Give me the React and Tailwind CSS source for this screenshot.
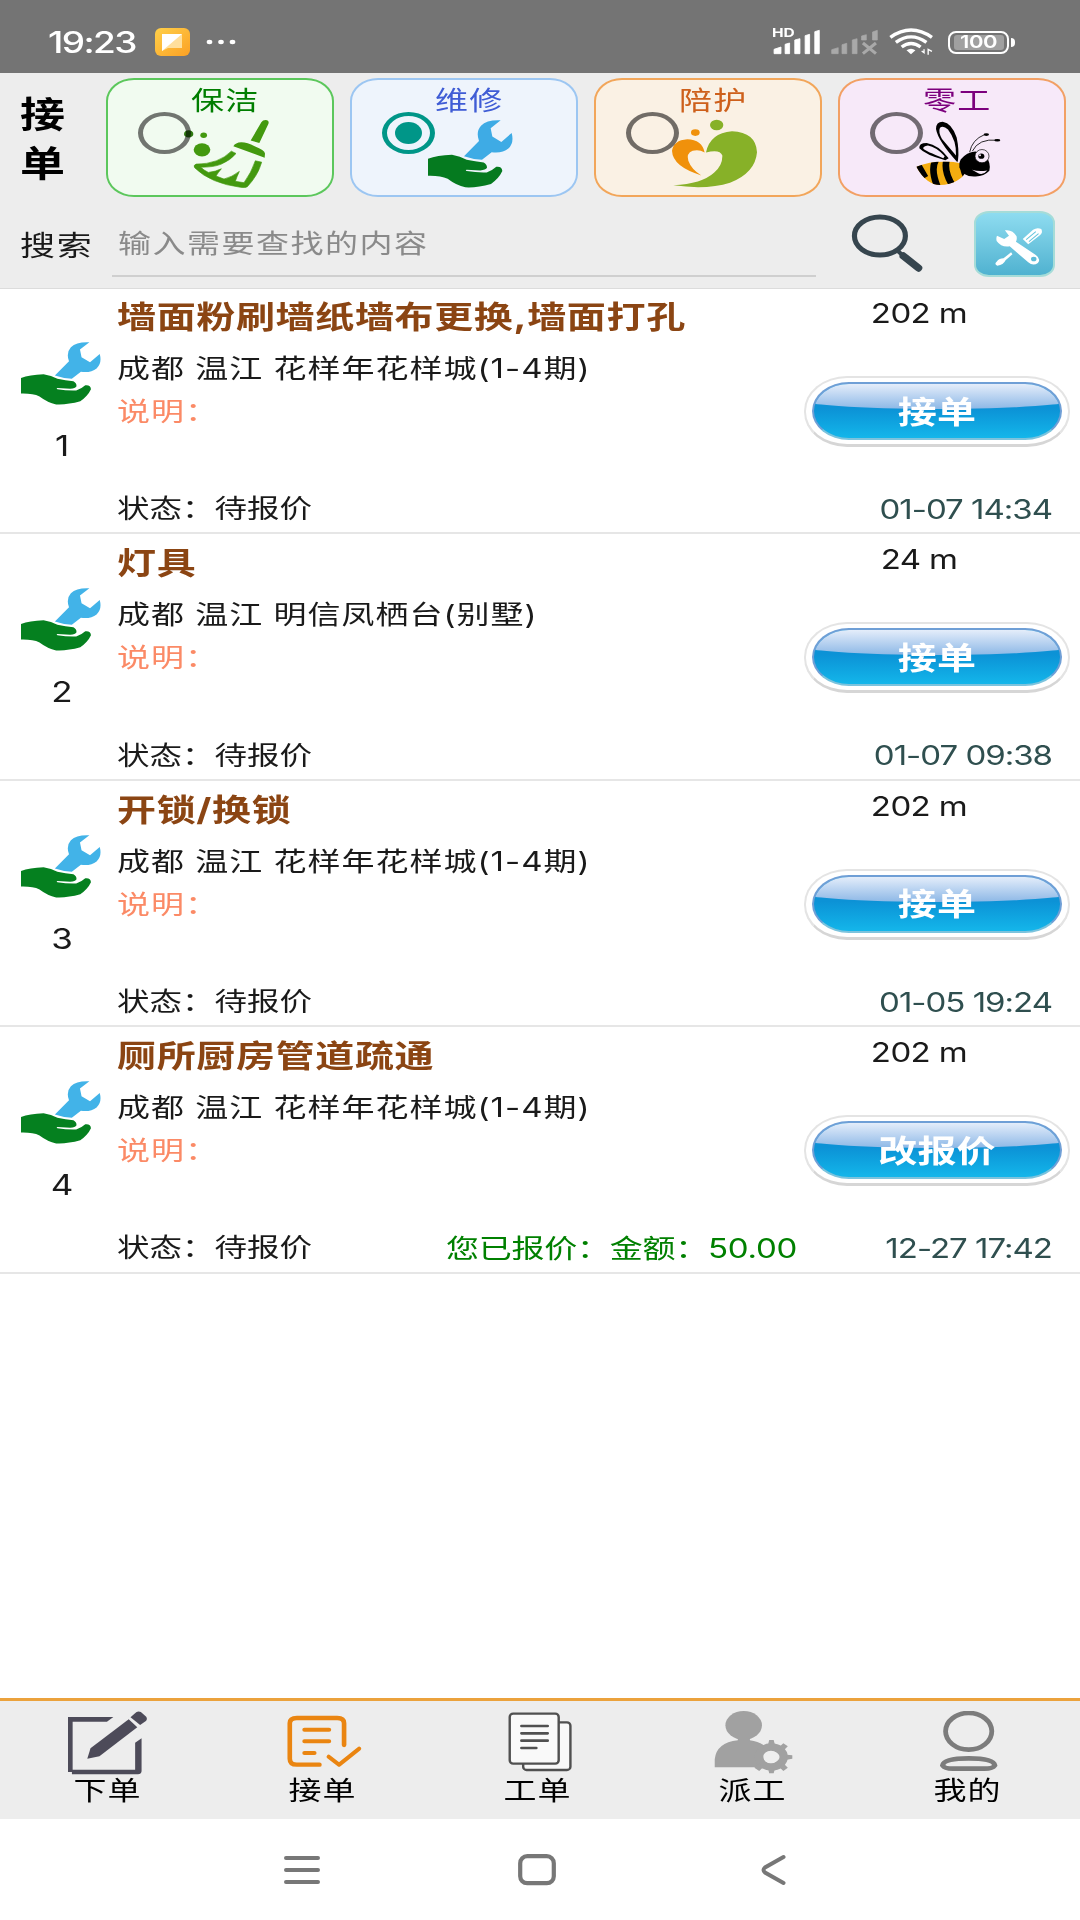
import { useState } from 'react';

const orders = [
  { id: 1, title: '墙面粉刷墙纸墙布更换,墙面打孔', address: '成都 温江 花样年花样城(1-4期)', distance: '202 m', action: '接单', time: '01-07 14:34' },
  { id: 2, title: '灯具', address: '成都 温江 明信凤栖台(别墅)', distance: '24 m', action: '接单', time: '01-07 09:38' },
  { id: 3, title: '开锁/换锁', address: '成都 温江 花样年花样城(1-4期)', distance: '202 m', action: '接单', time: '01-05 19:24' },
  { id: 4, title: '厕所厨房管道疏通', address: '成都 温江 花样年花样城(1-4期)', distance: '202 m', action: '改报价', time: '12-27 17:42', quote: '您已报价：金额：50.00' },
];

// Wide lettering: every label is drawn at 80% height
function Text({ className = '', children }) {
  return <span className={`inline-block scale-y-80 leading-none whitespace-pre ${className}`}>{children}</span>;
}

function BroomIcon() {
  return (
    <svg className="h-[69px] w-[85px]" viewBox="160 118 255 208" preserveAspectRatio="none" fill="#479c10">
      <ellipse cx="174" cy="163" rx="14" ry="11" fill="#2f7a10" />
      <ellipse cx="219" cy="167" rx="10" ry="8" />
      <ellipse cx="214" cy="211" rx="25" ry="20" />
      <path d="M392 128 Q396 121 405 121 Q417 123 413 133 L386 190 L360 183 Z" />
      <path d="M308 200 Q314 189 332 188 Q350 188 372 200 Q402 212 403 222 L402 235 Z" />
      <path stroke="#479c10" strokeWidth="2" d="M302 215 L316 222 Q300 242 272 254 Q248 264 210 263 Q218 272 233 279 Q255 277 272 268 Q262 280 256 290 L280 299 Q304 293 326 276 Q318 293 314 306 L340 310 Q362 280 374 244 L393 248 Q382 288 350 322 Q344 326 330 324 Q240 312 193 266 Q186 258 196 254 Q264 254 302 215 Z" />
    </svg>
  );
}

function RepairIcon({ className }) {
  return (
    <svg className={className} viewBox="23 118 255 208" preserveAspectRatio="none">
      <path fill="#42b3e8" d="M131 230 L176 184 Q166 156 182 138 Q200 120 241 122 L211 146 L216 171 L243 187 L274 160 Q282 190 264 207 Q246 222 214 218 L185 241 Q160 240 131 230 Z" />
      <path fill="#05801f" d="M23 238 Q50 228 95 226 Q120 230 139 241 Q165 246 190 249 Q200 254 200 265 Q196 272 180 273 L139 271 Q134 273 139 275 Q170 280 199 279 Q215 274 228 262 Q245 260 246 275 Q236 297 212 314 Q170 326 135 324 Q108 318 82 298 Q60 288 23 289 Z" />
    </svg>
  );
}

function CareIcon() {
  return (
    <svg className="h-[69px] w-[85px]" viewBox="126 118 255 208" preserveAspectRatio="none">
      <ellipse cx="260" cy="136" rx="20" ry="16" fill="#8abb2c" />
      <ellipse cx="196" cy="159" rx="13" ry="10" fill="#f59a0c" />
      <path fill="#f59a0c" d="M214 288 Q128 262 126 214 Q130 182 172 179 Q216 180 224 219 Q206 208 188 214 Q168 222 175 244 Q184 270 214 288 Z" />
      <path fill="#8abb2c" d="M228 219 Q240 160 306 155 Q378 158 381 218 Q376 280 300 310 Q232 332 130 318 Q216 313 252 280 Q278 258 277 228 Q270 208 228 219 Z" />
    </svg>
  );
}

function BeeIcon() {
  return (
    <svg className="h-[69px] w-[85px]" viewBox="140 118 255 208" preserveAspectRatio="none">
      <path fillRule="evenodd" d="M264 248 Q206 184 200 148 Q200 126 220 126 Q248 130 262 174 Q270 212 266 242 Z M260 228 Q262 184 236 150 Q222 136 212 144 Q206 156 218 178 Z" />
      <path fillRule="evenodd" d="M238 236 L228 242 Q168 226 150 206 Q148 190 172 190 Q208 196 238 236 Z M226 230 Q200 202 176 198 Q160 200 162 208 Q170 216 222 236 Z" />
      <clipPath id="bee-body">
        <path d="M141 262 Q180 246 225 246 Q275 246 288 262 Q294 296 240 313 Q200 324 175 304 Q156 290 141 262 Z" />
      </clipPath>
      <g clipPath="url(#bee-body)">
        <path fill="#fcbd10" d="M141 240 H300 V326 H141 Z" />
        <g fill="none" stroke="#000" strokeWidth="20">
          <path d="M140 250 Q150 268 166 296" strokeWidth="24" />
          <path d="M200 240 Q182 270 206 326" />
          <path d="M232 240 Q222 276 252 322" />
          <path d="M284 240 Q268 270 290 300" strokeWidth="8" />
        </g>
      </g>
      <path d="M274 240 Q292 218 318 216 L348 226 Q366 252 360 274 Q344 292 316 291 Q280 292 270 264 Q268 250 274 240 Z" />
      <ellipse cx="338" cy="230" rx="21" ry="20" fill="#fff" stroke="#000" strokeWidth="2" />
      <ellipse cx="336" cy="230" rx="9" ry="8" />
      <ellipse cx="332" cy="227" rx="3" ry="3" fill="#fff" />
      <path d="M308 271 Q328 278 354 273 Q340 290 324 280 Z" fill="#fff" />
      <path d="M301 218 Q308 180 346 165 M309 215 Q328 176 384 182" fill="none" stroke="#000" strokeWidth="2.5" />
      <ellipse cx="351" cy="165" rx="8" ry="4" />
      <ellipse cx="384" cy="182" rx="9" ry="4" />
    </svg>
  );
}

const categories = [
  { name: '保洁', card: 'border-[#5cc75c] bg-[#f1fbf0]', text: 'text-[#008000]', ring: 'border-[#717570]', icon: <BroomIcon /> },
  { name: '维修', card: 'border-[#9cc6f2] bg-[#eef4fc]', text: 'text-[#4360d8]', ring: 'border-[#009688]', icon: <RepairIcon className="h-[69px] w-[85px]" /> },
  { name: '陪护', card: 'border-[#f2a65a] bg-[#faf1e4]', text: 'text-[#d2651e]', ring: 'border-[#716c66]', icon: <CareIcon /> },
  { name: '零工', card: 'border-[#f2a065] bg-[#f7e9f9]', text: 'text-[#800080]', ring: 'border-[#716a72]', icon: <BeeIcon /> },
];

const tabs = [
  {
    name: '下单',
    icon: (
      <svg className="h-16 w-20" viewBox="191 93 224 192" preserveAspectRatio="none" fill="#4d4b59">
        <path d="M190 111 H318 L300 125 H204 V269 H379 V188 L397 175 V274 Q396 283 387 283 H202 V276 H190 Z" />
        <path d="M361 118 L385 142 L279 229 L245 236 L254 205 Z" />
        <path d="M366 112 L382 97 Q388 92 395 96 L410 110 Q414 117 409 123 L393 135 Z" />
      </svg>
    ),
  },
  {
    name: '接单',
    icon: (
      <svg className="h-16 w-20" viewBox="793 93 224 192" preserveAspectRatio="none" fill="none" stroke="#ea8511" strokeLinecap="round" strokeLinejoin="round">
        <path d="M964 195 V130 Q964 114 945 114 H832 Q812 114 812 130 V236 Q812 254 832 254 H895" strokeWidth="13" />
        <path d="M853 149 H922 M853 184 H922 M853 219 H881" strokeWidth="12" />
        <path d="M921 230 L950 254 L1006 206" strokeWidth="12" />
      </svg>
    ),
  },
  {
    name: '工单',
    icon: (
      <svg className="h-16 w-20" viewBox="-122 93 232 192" preserveAspectRatio="none" fill="#f9f9f9" stroke="#505050" strokeWidth="7" strokeLinecap="round">
        <rect x="-49" y="127" width="137" height="143" rx="10" />
        <rect x="-88" y="101" width="142" height="150" rx="10" />
        <path d="M-54 138 H22 M-54 160 H22 M-54 182 H22 M-54 204 H-11" strokeWidth="8" />
      </svg>
    ),
  },
  {
    name: '派工',
    icon: (
      <svg className="h-16 w-20" viewBox="502 93 232 192" preserveAspectRatio="none" fill="#a1a1a1">
        <ellipse cx="591" cy="136" rx="53" ry="43" />
        <path d="M574 172 H609 V181 Q632 184 650 196 V262 H507 V238 Q512 188 574 181 Z" />
        <ellipse cx="671" cy="231" rx="36" ry="29" fill="none" stroke="#a1a1a1" strokeWidth="24" />
        <path d="M662 192 L665 180 H678 L681 192 Z M662 268 L665 280 H678 L681 268 Z M716 224 L732 226 V236 L716 239 Z M694 201 L706 190 L719 199 L706 212 Z M694 261 L706 273 L719 263 L706 250 Z M648 261 L636 273 L622 263 L636 250 Z M648 201 L638 190 L625 197 L636 212 Z" />
        <ellipse cx="670" cy="231" rx="22" ry="19" fill="#eee" />
      </svg>
    ),
  },
  {
    name: '我的',
    icon: (
      <svg className="h-16 w-20" viewBox="1126 93 232 192" preserveAspectRatio="none" fill="none" stroke="#7c7c7c" strokeWidth="14">
        <ellipse cx="1244" cy="154" rx="67" ry="55" />
        <path d="M1168 256 Q1172 235 1244 235 Q1316 235 1320 256 Q1314 266 1290 266 H1198 Q1174 266 1168 256 Z" />
      </svg>
    ),
  },
];

function StatusBar() {
  return (
    <header className="flex h-[73px] shrink-0 items-center bg-[#747474] pt-[11px] pl-12 pr-[65px] text-white">
      <Text className="w-[107px] text-[37px] font-medium tracking-[-1.6px]">19:23</Text>
      <svg className="h-7 w-[35px]" viewBox="0 0 35 28">
        <defs>
          <linearGradient id="app-badge" x1="0" y1="0" x2="1" y2="1">
            <stop offset="0" stopColor="#ffd04a" />
            <stop offset="1" stopColor="#fba024" />
          </linearGradient>
        </defs>
        <rect width="35" height="28" rx="6" fill="url(#app-badge)" />
        <path d="M7 6 H27 V20 H13 L7 23 Z" fill="#ffdf9c" />
        <path d="M7 6 H27 L7 23 Z" fill="#fff" />
      </svg>
      <svg className="ml-4 h-2 w-[30px]" viewBox="0 0 30 8" fill="#fff">
        <ellipse cx="3.5" cy="4" rx="2.8" ry="2.2" />
        <ellipse cx="15" cy="4" rx="2.8" ry="2.2" />
        <ellipse cx="26.5" cy="4" rx="2.8" ry="2.2" />
      </svg>

      <div className="ml-auto flex items-center">
        {/* SIM 1, HD */}
        <div className="relative h-7 w-[49px]">
          <Text className="absolute -top-[3px] left-0 text-[15.5px] font-bold">HD</Text>
          <svg className="h-7 w-[49px]" viewBox="672 86 142 84" preserveAspectRatio="none" fill="#fff" stroke="#fff" strokeWidth="2.5" strokeLinejoin="round">
            <path d="M678 150 L698 143 V163 H678 Z M710 135 L723 131 V163 H710 Z M738 122 L753 118 V163 H738 Z M768 109 L781 105 V163 H768 Z M796 97 L809 93 V163 H796 Z" />
          </svg>
        </div>
        {/* SIM 2, no service */}
        <svg className="ml-[10px] h-7 w-[47px]" viewBox="843 86 137 84" preserveAspectRatio="none" fill="#a9a9a9" stroke="#a9a9a9" strokeWidth="2">
          <path d="M845 151 L864 145 V163 H845 Z M875 136 L889 132 V163 H875 Z M905 122 L919 118 V163 H905 Z M932 110 L946 106 V122 H932 Z M964 98 L978 93 V122 H964 Z" />
          <path d="M936 131 L974 163 M974 131 L936 163" strokeWidth="9" />
        </svg>
        <svg className="ml-[11px] h-7 w-[45px]" viewBox="1013 86 131 84" preserveAspectRatio="none" fill="none" stroke="#fff" strokeWidth="10">
          <path d="M1017 114 Q1077 70 1138 114 M1033 129 Q1077 96 1122 129 M1050 143 Q1077 122 1105 143" />
          <path d="M1064 153 Q1077 144 1090 153 L1077 165 Z" fill="#fff" stroke="none" />
          <path d="M1115 150 V160 L1108 155 M1127 166 V150 L1138 156" strokeWidth="4" />
        </svg>
        <div className="ml-[14px] flex items-center">
          <div className="flex h-[23px] w-[61px] items-center justify-center rounded-[8px] border-[2.5px] border-white">
            <div className="flex h-[15px] w-[50px] items-center justify-center rounded-[3px] bg-[#a0a0a0]">
              <Text className="text-[22px] font-semibold tracking-[-0.5px]">100</Text>
            </div>
          </div>
          <div className="ml-[2px] h-[9px] w-[4px] rounded-r-sm bg-white" />
        </div>
      </div>
    </header>
  );
}

function CategoryCard({ category, selected, onSelect }) {
  return (
    <button
      onClick={onSelect}
      className={`flex h-[119px] w-[228px] items-start rounded-[28px_/_23px] border-2 pl-[30px] text-left ${category.card}`}
    >
      <span className={`mt-[32px] flex h-[42px] w-[53px] shrink-0 items-center justify-center rounded-[50%] border-x-[5.5px] border-y-[4.5px] ${category.ring}`}>
        {selected && <span className="h-[22px] w-[27px] rounded-[50%] bg-[#009688]" />}
      </span>
      <span className="-ml-[7px] flex w-[85px] flex-col pt-[4px] mix-blend-multiply">
        <Text className={`h-[35px] pl-[7px] text-[33px] tracking-[1.2px] ${category.text}`}>{category.name}</Text>
        {category.icon}
      </span>
    </button>
  );
}

function SearchBar() {
  return (
    <div className="flex h-[91px] items-start">
      <Text className="mt-[31px] w-[112px] shrink-0 pl-[20px] text-[35px] tracking-[1.8px] text-[#1a1a1a]">搜索</Text>
      <div className="h-[80px] w-[704px] shrink-0 border-b-2 border-[#cfcfcf] pt-[30px] pl-[6px]">
        <Text className="text-[33px] tracking-[1.5px] text-[#8a8a8a]">输入需要查找的内容</Text>
      </div>
      <svg className="mt-[17px] ml-[35px] h-[60px] w-[73px] shrink-0" viewBox="902 642 212 180" preserveAspectRatio="none">
        <ellipse cx="986" cy="708" rx="74" ry="57" fill="none" stroke="#36454e" strokeWidth="15" />
        <path d="M1038 753 L1052 766" stroke="#36454e" strokeWidth="12" />
        <path d="M1054 768 L1098 804" stroke="#36454e" strokeWidth="22" strokeLinecap="round" />
      </svg>
      <button className="mt-[14px] ml-[50px] flex h-[66px] w-[81px] shrink-0 rounded-[15px_/_12px] border-2 border-[#a5dcd8] bg-linear-to-b from-[#8edcf0] to-[#4fb2d0]">
        <svg className="h-[62px] w-[77px]" viewBox="1266 638 224 186" preserveAspectRatio="none" fill="#fff">
          <path d="M1350 690 Q1372 686 1384 708 Q1386 718 1382 724 L1440 764 Q1456 776 1446 788 Q1432 798 1418 786 L1364 738 Q1340 742 1326 722 Q1324 714 1327 706 L1348 716 L1362 706 Z" />
          <ellipse cx="1434" cy="776" rx="8" ry="7" fill="#5ebcd8" />
          <path d="M1402 716 L1432 688 Q1444 680 1456 686 Q1462 698 1450 706 L1418 732 Z" />
          <path d="M1412 718 L1440 694 M1420 724 L1448 700" stroke="#66c4dc" strokeWidth="3" />
          <path d="M1368 756 L1372 762 L1352 780 Q1346 794 1328 796 Q1318 792 1326 784 Q1334 774 1346 774 Z" />
        </svg>
      </button>
    </div>
  );
}

function ActionButton({ children }) {
  return (
    <button className="flex h-[71px] w-[266px] items-center justify-center rounded-[43px_/_35px] border-2 border-b-[3px] border-[#e4e4e4] border-b-[#d6d6d6] bg-white">
      <span className="relative flex h-[58px] w-[250px] items-center justify-center overflow-hidden rounded-[37px_/_29px] border-2 border-[#6f9fd6] border-b-[#7cc3dd] bg-linear-to-b from-[#0c92d6] from-45% to-[#14b6ea]">
        <span className="absolute -inset-x-4 top-0 h-[25px] rounded-b-[50%_10px] bg-linear-to-b from-[#e4edfa] to-[#8db8e6]" />
        <Text className="relative text-[39px] font-bold tracking-[0.2px] text-white">{children}</Text>
      </span>
    </button>
  );
}

function OrderRow({ order }) {
  return (
    <li className="flex h-[246.4px] border-b-2 border-[#e6e6e6]">
      <div className="w-[117px] shrink-0 pt-[53px]">
        <RepairIcon className="ml-[21px] h-16 w-20" />
        <div className="mt-[23px] flex w-[124px] justify-center">
          <Text className="text-[35px] text-[#1a1a1a]">{order.id}</Text>
        </div>
      </div>
      <div className="flex flex-1 flex-col">
        <div className="flex h-[205px] justify-between pr-[10px]">
          <div className="flex flex-col items-start pt-[9px]">
            <Text className="text-[39px] font-bold tracking-[0.65px] text-[#8b4513]">{order.title}</Text>
            <Text className="mt-[16px] text-[33px] tracking-[1px] text-[#1a1a1a]">{order.address}</Text>
            <Text className="mt-[10px] text-[33px] tracking-[1px] text-[#fb8a66]">说明：</Text>
          </div>
          <div className="flex w-[266px] flex-col items-center pt-[9px]">
            <Text className="mr-9 text-[33px] tracking-[-0.6px] text-[#1a1a1a]">{order.distance}</Text>
            <div className="mt-[46px]">
              <ActionButton>{order.action}</ActionButton>
            </div>
          </div>
        </div>
        <div className="flex items-center pr-[28px]">
          <Text className="w-[329px] text-[32.5px] text-[#1a1a1a]">状态：待报价</Text>
          {order.quote && <Text className="text-[33px] tracking-[-0.25px] text-[#008000]">{order.quote}</Text>}
          <Text className="ml-auto text-[33px] tracking-[-1px] text-[#2f4f4f]">{order.time}</Text>
        </div>
      </div>
    </li>
  );
}

export default function App() {
  const [selected, setSelected] = useState('维修');

  return (
    <div className="flex h-[1920px] w-[1080px] flex-col overflow-hidden bg-white font-['Inter','Noto_Sans_CJK_SC',sans-serif]">
      <StatusBar />

      <section className="h-[216px] shrink-0 border-b border-[#dcdcdc] bg-[#ededed]">
        <div className="flex items-start pt-[5px]">
          <div className="flex w-[106px] flex-col pt-[14px] pl-[20px]">
            <Text className="text-[45px] font-bold text-black">接</Text>
            <Text className="mt-[4px] text-[45px] font-bold text-black">单</Text>
          </div>
          <div className="flex gap-4">
            {categories.map((category) => (
              <CategoryCard
                key={category.name}
                category={category}
                selected={category.name === selected}
                onSelect={() => setSelected(category.name)}
              />
            ))}
          </div>
        </div>
        <SearchBar />
      </section>

      <ul className="-mt-px">
        {orders.map((order) => (
          <OrderRow key={order.id} order={order} />
        ))}
      </ul>

      <nav className="mt-auto grid h-[121px] shrink-0 grid-cols-5 border-t-[3px] border-[#eba23c] bg-[#ededed] pt-[10px] pr-[5px]">
        {tabs.map((tab) => (
          <button key={tab.name} className="flex flex-col items-center">
            {tab.icon}
            <Text className="-mt-px text-[33px] tracking-[1px] text-black">{tab.name}</Text>
          </button>
        ))}
      </nav>

      {/* System navigation */}
      <footer className="flex h-[101px] shrink-0 items-center bg-white pl-[284px]">
        <svg className="h-[32px] w-[36px]" viewBox="0 0 36 32" stroke="#777" strokeWidth="4" strokeLinecap="round">
          <path d="M2 4 H34 M2 16 H34 M2 28 H34" />
        </svg>
        <svg className="ml-[198px] h-[32px] w-[38px]" viewBox="0 0 38 32" fill="none" stroke="#777" strokeWidth="4.2">
          <rect x="2.2" y="2.2" width="33.6" height="27" rx="7" />
        </svg>
        <svg className="ml-[205px] h-[32px] w-[25px]" viewBox="0 0 25 32" fill="none" stroke="#777" strokeWidth="4" strokeLinecap="round">
          <path d="M22.5 3 L4 13.5 Q1 16 4 18.5 L22.5 29" />
        </svg>
      </footer>
    </div>
  );
}
